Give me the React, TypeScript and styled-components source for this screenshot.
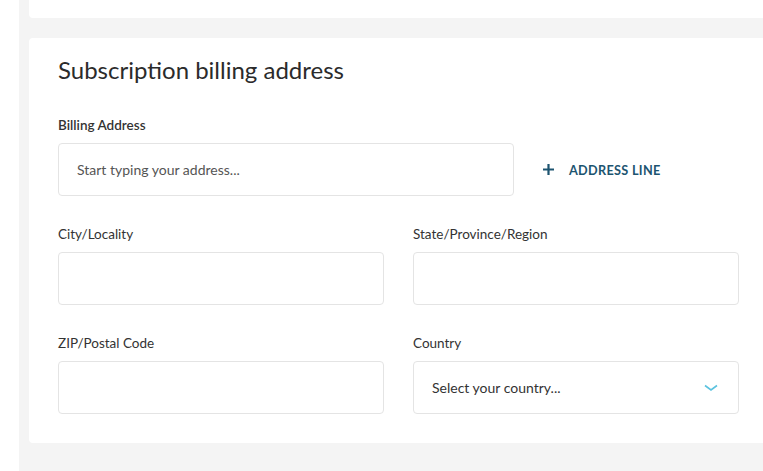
import React from 'react';
import styled, { createGlobalStyle } from 'styled-components';

const GlobalStyle = createGlobalStyle`
  html, body {
    margin: 0;
    padding: 0;
    background: #fff;
    overflow: hidden;
  }
  body {
    font-family: Lato, "Open Sans", sans-serif;
    color: #2b2b2b;
  }
`;

const Panel = styled.div`
  margin: 10px 0 0 19px;
  width: 780px;
  min-height: 480px;
  padding: 0 0 40px 10px;
  background: #f4f4f4;
  box-sizing: border-box;
`;

const PrevCard = styled.div`
  margin-top: -10px;
  height: 18px;
  background: #fff;
  border-radius: 0 0 4px 4px;
`;

const Card = styled.section`
  margin-top: 20px;
  background: #fff;
  border-radius: 4px 0 0 4px;
  padding: 17px 0 29px 29px;
`;

const Title = styled.h2`
  margin: 0 0 32px;
  font-size: 24px;
  line-height: 30px;
  font-weight: 400;
  color: #2b2b2b;
`;

const Label = styled.label<{ $strong?: boolean }>`
  display: block;
  margin-bottom: 10px;
  font-size: 13.5px;
  line-height: 16px;
  font-weight: ${p => (p.$strong ? 600 : 400)};
  color: #333;
`;

const AddressRow = styled.div`
  display: flex;
  align-items: center;
  gap: 29px;
  margin-bottom: 30px;
`;

const Box = styled.div`
  box-sizing: border-box;
  height: 53px;
  border: 1px solid #e4e4e4;
  border-radius: 4px;
  background: #fff;
  display: flex;
  align-items: center;
  padding: 0 18px;
  font-size: 14px;
`;

const AddressBox = styled(Box)`
  width: 456px;
  color: #555;
`;

const AddLine = styled.button`
  display: flex;
  align-items: center;
  gap: 15px;
  border: 0;
  background: none;
  padding: 0;
  font-family: inherit;
  font-size: 12.7px;
  font-weight: 700;
  letter-spacing: 0.3px;
  color: #1d5470;
  cursor: pointer;
`;

const Grid = styled.div`
  display: grid;
  grid-template-columns: 326px 326px;
  column-gap: 29px;
  row-gap: 30px;
`;

const Select = styled(Box)`
  justify-content: space-between;
  color: #333;
  padding-right: 20px;
`;

function Field({ label, children }: { label: string; children?: React.ReactNode }) {
  return (
    <div>
      <Label>{label}</Label>
      {children ?? <Box />}
    </div>
  );
}

export default function App() {
  return (
    <>
      <GlobalStyle />
      <Panel>
        <PrevCard />
        <Card>
          <Title>Subscription billing address</Title>
          <Label $strong>Billing Address</Label>
          <AddressRow>
            <AddressBox>Start typing your address...</AddressBox>
            <AddLine>
              <svg width="11" height="11" viewBox="0 0 11 11">
                <path d="M5.5 0v11M0 5.5h11" stroke="#1d5470" strokeWidth="2.2" />
              </svg>
              ADDRESS LINE
            </AddLine>
          </AddressRow>
          <Grid>
            <Field label="City/Locality" />
            <Field label="State/Province/Region" />
            <Field label="ZIP/Postal Code" />
            <Field label="Country">
              <Select>
                Select your country...
                <svg width="14" height="8" viewBox="0 0 14 8">
                  <path d="M1 1.5l6 4.5 6-4.5" fill="none" stroke="#5cc3df" strokeWidth="1.6" />
                </svg>
              </Select>
            </Field>
          </Grid>
        </Card>
      </Panel>
    </>
  );
}
